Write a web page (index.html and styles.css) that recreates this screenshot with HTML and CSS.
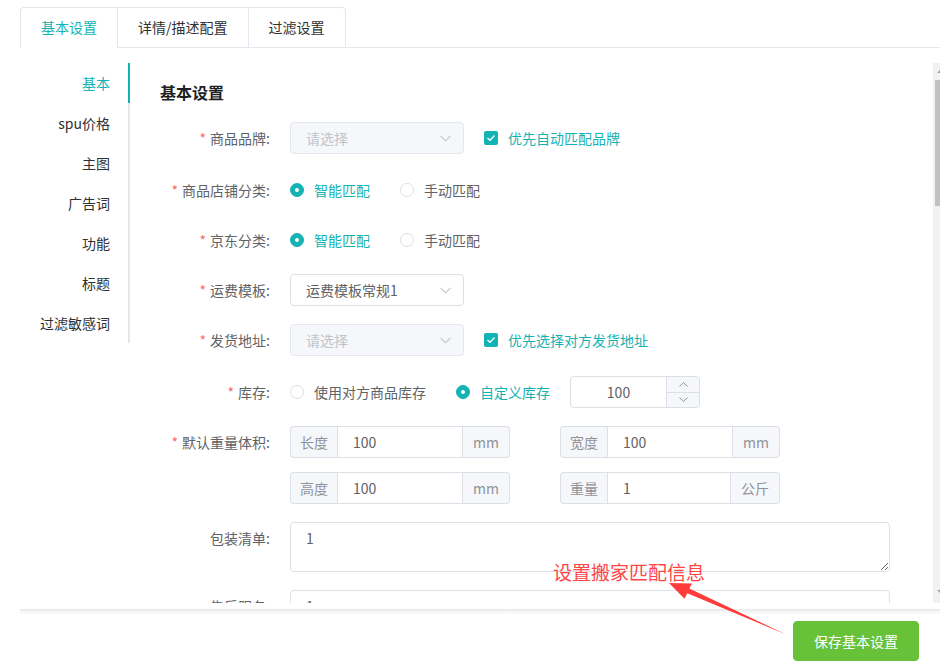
FILE: index.html
```html
<!DOCTYPE html>
<html lang="zh-CN">
<head>
<meta charset="utf-8">
<title>基本设置</title>
<link rel="stylesheet" href="styles.css">
</head>
<body>
<div class="page">
  <div class="tabs-header">
    <div class="tabs-nav">
      <div class="tab active">基本设置</div>
      <div class="tab">详情/描述配置</div>
      <div class="tab">过滤设置</div>
    </div>
  </div>

  <div class="main">
    <div class="side-nav">
      <div class="side-item active">基本</div>
      <div class="side-item">spu价格</div>
      <div class="side-item">主图</div>
      <div class="side-item">广告词</div>
      <div class="side-item">功能</div>
      <div class="side-item">标题</div>
      <div class="side-item">过滤敏感词</div>
    </div>

    <div class="scroll">
      <div class="content">
        <h3 class="section-title">基本设置</h3>

        <div class="form-item mb20">
          <label class="label"><span class="req">*</span>商品品牌:</label>
          <div class="select disabled">
            <span>请选择</span>
            <svg class="sel-arrow" width="11" height="7" viewBox="0 0 11 7"><polyline points="0.5,0.8 5.5,5.8 10.5,0.8" fill="none" stroke="#c0c4cc" stroke-width="1.1"/></svg>
          </div>
          <span class="checkbox">
            <span class="cb-box"><svg width="10" height="8" viewBox="0 0 10 8"><polyline points="1.5,4 4,6.3 8.5,1.5" fill="none" stroke="#fff" stroke-width="1.3"/></svg></span>
            优先自动匹配品牌
          </span>
        </div>

        <div class="form-item">
          <label class="label"><span class="req">*</span>商品店铺分类:</label>
          <span class="radio checked"><span class="radio-dot"></span>智能匹配</span>
          <span class="radio"><span class="radio-dot"></span>手动匹配</span>
        </div>

        <div class="form-item">
          <label class="label"><span class="req">*</span>京东分类:</label>
          <span class="radio checked"><span class="radio-dot"></span>智能匹配</span>
          <span class="radio"><span class="radio-dot"></span>手动匹配</span>
        </div>

        <div class="form-item">
          <label class="label"><span class="req">*</span>运费模板:</label>
          <div class="select">
            <span>运费模板常规1</span>
            <svg class="sel-arrow" width="11" height="7" viewBox="0 0 11 7"><polyline points="0.5,0.8 5.5,5.8 10.5,0.8" fill="none" stroke="#c0c4cc" stroke-width="1.1"/></svg>
          </div>
        </div>

        <div class="form-item mb20">
          <label class="label"><span class="req">*</span>发货地址:</label>
          <div class="select disabled">
            <span>请选择</span>
            <svg class="sel-arrow" width="11" height="7" viewBox="0 0 11 7"><polyline points="0.5,0.8 5.5,5.8 10.5,0.8" fill="none" stroke="#c0c4cc" stroke-width="1.1"/></svg>
          </div>
          <span class="checkbox">
            <span class="cb-box"><svg width="10" height="8" viewBox="0 0 10 8"><polyline points="1.5,4 4,6.3 8.5,1.5" fill="none" stroke="#fff" stroke-width="1.3"/></svg></span>
            优先选择对方发货地址
          </span>
        </div>

        <div class="form-item">
          <label class="label"><span class="req">*</span>库存:</label>
          <span class="radio"><span class="radio-dot"></span>使用对方商品库存</span>
          <span class="radio checked tight"><span class="radio-dot"></span>自定义库存</span>
          <div class="num">
            <span class="num-val">100</span>
            <span class="num-ctrl">
              <span class="num-btn up"><svg width="9" height="5" viewBox="0 0 9 5"><polyline points="0.5,4.5 4.5,0.7 8.5,4.5" fill="none" stroke="#909399" stroke-width="1"/></svg></span>
              <span class="num-btn"><svg width="9" height="5" viewBox="0 0 9 5"><polyline points="0.5,0.5 4.5,4.3 8.5,0.5" fill="none" stroke="#909399" stroke-width="1"/></svg></span>
            </span>
          </div>
        </div>

        <div class="form-item mb14">
          <label class="label"><span class="req">*</span>默认重量体积:</label>
          <div class="groups">
            <div class="group"><span class="prepend">长度</span><span class="ginput">100</span><span class="append">mm</span></div>
            <div class="group"><span class="prepend">宽度</span><span class="ginput">100</span><span class="append">mm</span></div>
          </div>
        </div>

        <div class="form-item">
          <label class="label"></label>
          <div class="groups">
            <div class="group"><span class="prepend">高度</span><span class="ginput">100</span><span class="append">mm</span></div>
            <div class="group"><span class="prepend">重量</span><span class="ginput">1</span><span class="append">公斤</span></div>
          </div>
        </div>

        <div class="form-item top">
          <label class="label">包装清单:</label>
          <textarea class="textarea" readonly>1</textarea>
        </div>

        <div class="form-item top">
          <label class="label">售后服务:</label>
          <textarea class="textarea" readonly>1</textarea>
        </div>
      </div>

      <div class="scrollbar">
        <span class="sb-up"></span>
        <span class="sb-thumb"></span>
        <span class="sb-down"></span>
      </div>
    </div>
  </div>

  <div class="footer">
    <button class="btn-save" type="button">保存基本设置</button>
  </div>

  <div class="note">设置搬家匹配信息</div>
  <svg class="note-arrow" width="940" height="668" viewBox="0 0 940 668">
    <polygon points="669,583 692,583.5 689.3,588.6 786,634.5 687.3,593.3 684.5,598.8" fill="#ff3b3b"/>
  </svg>
</div>
</body>
</html>
```

FILE: styles.css
```css
* { box-sizing: border-box; }

html, body { margin: 0; padding: 0; }

body {
  width: 940px;
  height: 668px;
  overflow: hidden;
  background: #fff;
  color: #606266;
  font-family: "Noto Sans CJK SC", "Microsoft YaHei", sans-serif;
  font-size: 14px;
}

.page {
  position: relative;
  width: 940px;
  height: 668px;
  padding: 7px 0 0 20px;
}

/* top tabs */
.tabs-header {
  display: flex;
  align-items: flex-start;
  height: 41px;
  border-bottom: 1px solid #e4e7ed;
}

.tabs-nav {
  display: flex;
  height: 41px;
  border: 1px solid #e4e7ed;
  border-bottom: none;
  border-radius: 4px 4px 0 0;
}

.tab {
  height: 40px;
  line-height: 39px;
  padding: 0 20px;
  border-bottom: 1px solid #e4e7ed;
  color: #303133;
  white-space: nowrap;
}

.tab + .tab { border-left: 1px solid #e4e7ed; }

.tab.active {
  color: #14b3b3;
  border-bottom-color: #fff;
}

/* main */
.main {
  display: flex;
  height: 555px;
  padding-top: 15px;
}

.side-nav {
  flex: none;
  align-self: flex-start;
  width: 110px;
  border-right: 2px solid #e4e7ed;
}

.side-item {
  position: relative;
  height: 40px;
  line-height: 40px;
  padding-right: 18px;
  text-align: right;
  color: #303133;
  white-space: nowrap;
}

.side-item.active { color: #14b3b3; }

.side-item.active::after {
  content: "";
  position: absolute;
  top: 0;
  right: -2px;
  width: 2px;
  height: 40px;
  background: #14b3b3;
}

.scroll {
  position: relative;
  flex: 1;
  height: 540px;
  overflow: hidden;
}

.content { padding: 17px 0 0 30px; }

.section-title {
  margin: 0 0 18px;
  font-size: 16px;
  line-height: 24px;
  font-weight: bold;
  color: #1f1f1f;
}

/* form */
.form-item {
  display: flex;
  align-items: center;
  min-height: 32px;
  margin-bottom: 18px;
}

.form-item.top { align-items: flex-start; }
.form-item.mb20 { margin-bottom: 20px; }
.form-item.mb14 { margin-bottom: 14px; }

.label {
  flex: none;
  width: 130px;
  padding-right: 20px;
  line-height: 32px;
  text-align: right;
  color: #606266;
  white-space: nowrap;
}

.req {
  color: #f56c6c;
  margin-right: 4px;
}

.select {
  display: flex;
  align-items: center;
  width: 174px;
  height: 32px;
  padding: 0 12px 0 15px;
  border: 1px solid #dcdfe6;
  border-radius: 4px;
  color: #606266;
  background: #fff;
}

.select.disabled {
  background: #f5f7fa;
  border-color: #e4e7ed;
  color: #c0c4cc;
}

.sel-arrow { margin-left: auto; }

.checkbox {
  display: flex;
  align-items: center;
  margin-left: 20px;
  color: #14b3b3;
}

.cb-box {
  display: flex;
  align-items: center;
  justify-content: center;
  width: 14px;
  height: 14px;
  margin-right: 10px;
  border-radius: 2px;
  background: #14b3b3;
}

.radio {
  display: flex;
  align-items: center;
  margin-right: 30px;
  color: #606266;
}

.radio.tight { margin-right: 20px; }

.radio-dot {
  position: relative;
  width: 14px;
  height: 14px;
  margin-right: 10px;
  border: 1px solid #dcdfe6;
  border-radius: 50%;
  background: #fff;
}

.radio.checked { color: #14b3b3; }

.radio.checked .radio-dot {
  background: #14b3b3;
  border-color: #14b3b3;
}

.radio.checked .radio-dot::after {
  content: "";
  position: absolute;
  left: 4px;
  top: 4px;
  width: 4px;
  height: 4px;
  border-radius: 50%;
  background: #fff;
}

/* number input */
.num {
  display: flex;
  width: 130px;
  height: 32px;
  border: 1px solid #dcdfe6;
  border-radius: 4px;
  overflow: hidden;
}

.num-val {
  flex: 1;
  line-height: 30px;
  text-align: center;
  color: #606266;
}

.num-ctrl {
  display: flex;
  flex-direction: column;
  width: 33px;
  border-left: 1px solid #dcdfe6;
  background: #f5f7fa;
}

.num-btn {
  flex: 1;
  display: flex;
  align-items: center;
  justify-content: center;
}

.num-btn.up { border-bottom: 1px solid #dcdfe6; }

/* input groups */
.groups {
  display: flex;
  gap: 50px;
}

.group {
  display: flex;
  width: 220px;
  height: 32px;
  line-height: 30px;
}

.prepend {
  padding: 0 9px;
  border: 1px solid #dcdfe6;
  border-right: none;
  border-radius: 4px 0 0 4px;
  background: #f5f7fa;
  color: #909399;
}

.ginput {
  flex: 1;
  padding: 0 15px;
  border: 1px solid #dcdfe6;
  color: #606266;
}

.append {
  padding: 0 10px;
  border: 1px solid #dcdfe6;
  border-left: none;
  border-radius: 0 4px 4px 0;
  background: #f5f7fa;
  color: #909399;
}

.textarea {
  display: block;
  width: 600px;
  height: 50px;
  padding: 5px 15px;
  border: 1px solid #dcdfe6;
  border-radius: 4px;
  font-family: inherit;
  font-size: 14px;
  line-height: 21px;
  color: #606266;
  resize: vertical;
  outline: none;
}

/* fake scrollbar */
.scrollbar {
  position: absolute;
  top: 0;
  right: 0;
  bottom: 0;
  width: 7px;
  background: #f1f1f1;
}

.sb-thumb {
  position: absolute;
  top: 17px;
  left: 2px;
  right: 0;
  height: 126px;
  background: #c1c1c1;
}

.sb-up, .sb-down {
  position: absolute;
  left: 4px;
  width: 0;
  height: 0;
  border-left: 3px solid transparent;
  border-right: 3px solid transparent;
}

.sb-up { top: 7px; border-bottom: 3px solid #a3a3a3; }
.sb-down { bottom: 10px; border-top: 3px solid #a3a3a3; }

/* footer */
.footer {
  display: flex;
  justify-content: flex-end;
  height: 59px;
  margin-top: 6px;
  padding: 12px 21px 0 0;
  background: linear-gradient(to bottom, #e8e8e8 0, #f6f6f6 3px, #fff 6px);
}

.btn-save {
  height: 40px;
  padding: 0 20px;
  border: 1px solid #67c23a;
  border-radius: 4px;
  background: #67c23a;
  color: #fff;
  font-family: inherit;
  font-size: 14px;
}

/* annotation overlay */
.note {
  position: absolute;
  left: 553px;
  top: 561px;
  font-size: 19px;
  line-height: 22px;
  color: #ff4646;
  white-space: nowrap;
}

.note-arrow {
  position: absolute;
  left: 0;
  top: 0;
  pointer-events: none;
}
```
